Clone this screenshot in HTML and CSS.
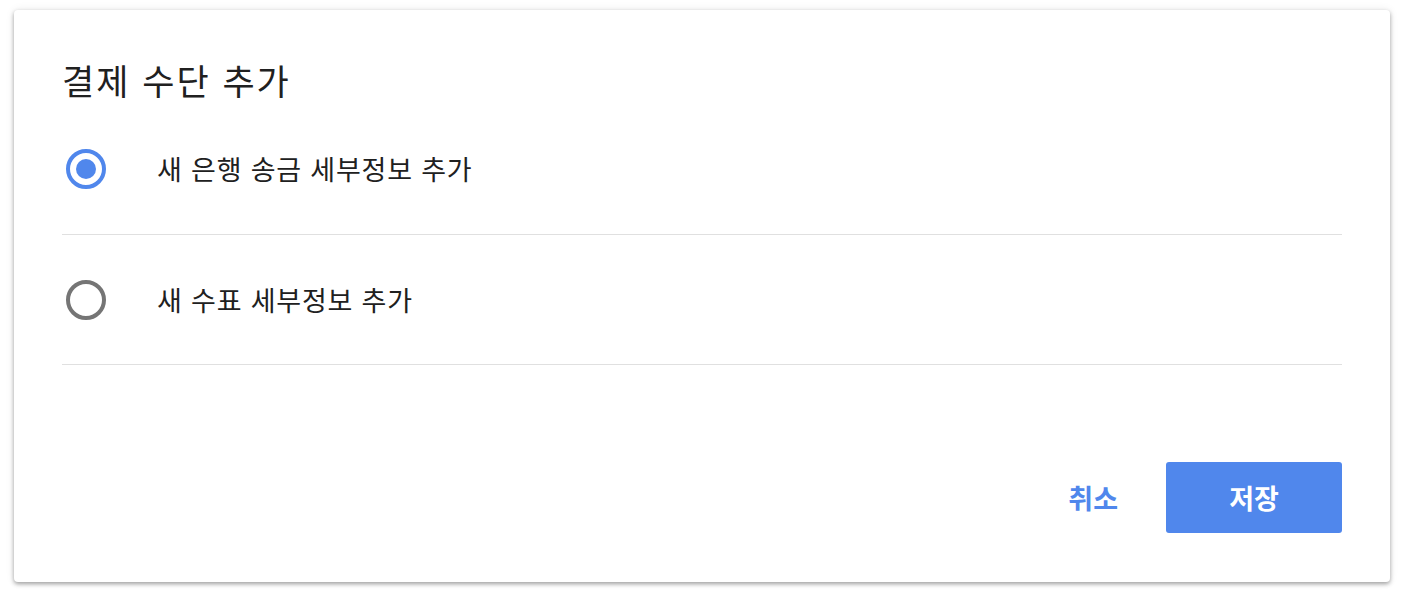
FILE: index.html
```html
<!DOCTYPE html>
<html lang="ko">
<head>
<meta charset="utf-8">
<link rel="stylesheet" href="styles.css">
</head>
<body>
<div class="dialog">
  <h1 class="title">결제 수단 추가</h1>
  <div class="options">
    <label class="option">
      <span class="radio checked"><span class="dot"></span></span>
      <span class="label">새 은행 송금 세부정보 추가</span>
    </label>
    <label class="option">
      <span class="radio"></span>
      <span class="label">새 수표 세부정보 추가</span>
    </label>
  </div>
  <div class="actions">
    <button class="btn-text">취소</button>
    <button class="btn-primary">저장</button>
  </div>
</div>
</body>
</html>
```
FILE: styles.css
```css
html, body {
  margin: 0;
  padding: 0;
  background: #ffffff;
}
body {
  padding: 10px 22px 14px 14px;
  font-family: "Noto Sans CJK KR", "Noto Sans", sans-serif;
  color: #212121;
}
.dialog {
  width: 1376px;
  height: 572px;
  box-sizing: border-box;
  background: #fff;
  border-radius: 4px;
  box-shadow: 0 2px 4px rgba(0,0,0,0.35), 0 0 10px rgba(0,0,0,0.08);
  padding: 46px 48px 0 48px;
  display: flex;
  flex-direction: column;
}
.title {
  margin: 0;
  font-size: 35px;
  letter-spacing: 2px;
  font-weight: 400;
  line-height: 48px;
  color: #202020;
}
.options {
  display: flex;
  flex-direction: column;
}
.option {
  height: 130px;
  border-bottom: 1px solid #e0e0e0;
  display: flex;
  align-items: center;
  box-sizing: border-box;
}
.option:first-child {
  height: 131px;
  padding-top: 0;
}
.radio {
  width: 40px;
  height: 40px;
  margin-left: 4px;
  box-sizing: border-box;
  border: 4px solid #757575;
  border-radius: 50%;
  display: flex;
  align-items: center;
  justify-content: center;
  flex: none;
}
.radio.checked {
  border-color: #5087ec;
}
.dot {
  width: 20px;
  height: 20px;
  border-radius: 50%;
  background: #5087ec;
}
.label {
  margin-left: 51px;
  font-size: 27px;
  letter-spacing: 0.8px;
  line-height: 36px;
  color: #202020;
}
.actions {
  margin-top: 97px;
  display: flex;
  justify-content: flex-end;
  align-items: center;
  gap: 24px;
}
.btn-text {
  font-family: inherit;
  background: none;
  border: none;
  color: #5087ec;
  font-size: 27px;
  font-weight: 700;
  padding: 0 24px;
  height: 71px;
}
.btn-primary {
  font-family: inherit;
  width: 176px;
  height: 71px;
  background: #5087ec;
  color: #fff;
  border: none;
  border-radius: 3px;
  font-size: 27px;
  font-weight: 700;
}
```
